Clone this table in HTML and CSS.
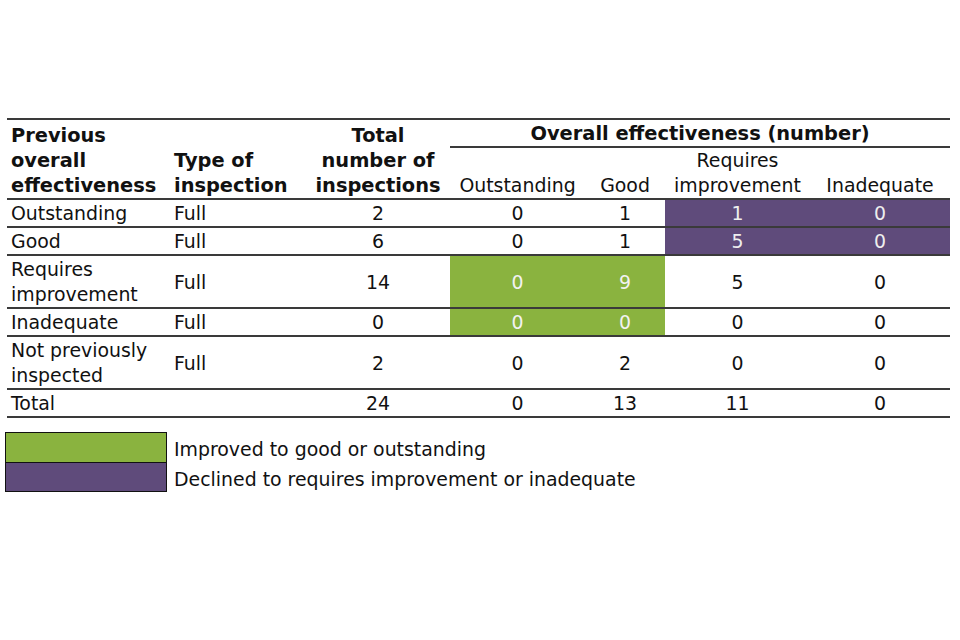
FILE: index.html
```html
<!DOCTYPE html>
<html>
<head>
<meta charset="utf-8">
<link rel="stylesheet" href="styles.css">
</head>
<body>
<div class="page">
  <table class="data">
    <colgroup>
      <col class="c1"><col class="c2"><col class="c3"><col class="c4"><col class="c5"><col class="c6"><col class="c7">
    </colgroup>
    <thead>
      <tr class="h1">
        <th rowspan="2" class="left top hb">Previous overall effectiveness</th>
        <th rowspan="2" class="left bottom hb">Type of inspection</th>
        <th rowspan="2" class="center bottom hb">Total number of inspections</th>
        <th colspan="4" class="center group">Overall effectiveness (number)</th>
      </tr>
      <tr class="h2">
        <th class="sub hb">Outstanding</th>
        <th class="sub hb">Good</th>
        <th class="sub hb">Requires improvement</th>
        <th class="sub hb">Inadequate</th>
      </tr>
    </thead>
    <tbody>
      <tr>
        <td class="left">Outstanding</td><td class="left">Full</td><td>2</td><td>0</td><td>1</td><td class="purple">1</td><td class="purple">0</td>
      </tr>
      <tr>
        <td class="left">Good</td><td class="left">Full</td><td>6</td><td>0</td><td>1</td><td class="purple">5</td><td class="purple">0</td>
      </tr>
      <tr>
        <td class="left">Requires improvement</td><td class="left">Full</td><td>14</td><td class="green">0</td><td class="green">9</td><td>5</td><td>0</td>
      </tr>
      <tr>
        <td class="left">Inadequate</td><td class="left">Full</td><td>0</td><td class="green">0</td><td class="green">0</td><td>0</td><td>0</td>
      </tr>
      <tr>
        <td class="left">Not previously inspected</td><td class="left">Full</td><td>2</td><td>0</td><td>2</td><td>0</td><td>0</td>
      </tr>
      <tr>
        <td class="left">Total</td><td class="left"></td><td>24</td><td>0</td><td>13</td><td>11</td><td>0</td>
      </tr>
    </tbody>
  </table>

  <div class="legend">
    <div class="legend-boxes">
      <div class="swatch swatch-green"></div>
      <div class="swatch swatch-purple"></div>
    </div>
    <div class="legend-labels">
      <div class="label">Improved to good or outstanding</div>
      <div class="label">Declined to requires improvement or inadequate</div>
    </div>
  </div>
</div>
</body>
</html>
```

FILE: styles.css
```css
html, body {
  margin: 0;
  padding: 0;
  background: #ffffff;
}

body {
  font-family: "DejaVu Sans", Verdana, sans-serif;
  font-size: 18.9px;
  color: #111111;
}

.page {
  padding-top: 118px;
}

.data {
  margin-left: 7px;
  width: 943px;
  table-layout: fixed;
  border-collapse: collapse;
  border-top: 2px solid #3a3a3a;
}

.c1 { width: 163px; }
.c2 { width: 136px; }
.c3 { width: 144px; }
.c4 { width: 135px; }
.c5 { width: 80px; }
.c6 { width: 145px; }
.c7 { width: 140px; }

th, td {
  padding: 0 4px;
  line-height: 25px;
  font-size: 18.9px;
}

th {
  font-weight: bold;
  font-size: 19.4px;
  letter-spacing: 0;
}

.h1 th {
  padding-top: 3px;
}

.h1 th.group {
  padding-top: 1px;
}

.left { text-align: left; }
.center { text-align: center; }
.top { vertical-align: top; }
.bottom { vertical-align: bottom; }

.group {
  border-bottom: 2px solid #3a3a3a;
  height: 25px;
}

.sub {
  font-weight: normal;
  font-size: 18.9px;
  text-align: center;
  vertical-align: bottom;
  padding: 0 2px;
}

.hb {
  border-bottom: 2px solid #3a3a3a;
}

td {
  text-align: center;
  vertical-align: middle;
  border-bottom: 2px solid #3a3a3a;
  padding-top: 1px;
  padding-bottom: 0;
}

.purple {
  background: #5f4b7b;
  color: #eeeeee;
}

.green {
  background: #8ab33f;
  color: #f2f2f2;
}

.legend {
  display: flex;
  align-items: flex-start;
  gap: 7px;
  margin-top: 14px;
  margin-left: 5px;
}

.legend-boxes {
  display: flex;
  flex-direction: column;
  border: 1.5px solid #111111;
  width: 160px;
}

.swatch {
  height: 29px;
}

.swatch-green {
  background: #8ab33f;
  border-bottom: 1.5px solid #111111;
}

.swatch-purple {
  background: #5f4b7b;
  height: 28px;
}

.legend-labels {
  display: flex;
  flex-direction: column;
  padding-top: 2px;
}

.label {
  line-height: 30px;
  font-size: 18.9px;
  color: #111111;
}
```
